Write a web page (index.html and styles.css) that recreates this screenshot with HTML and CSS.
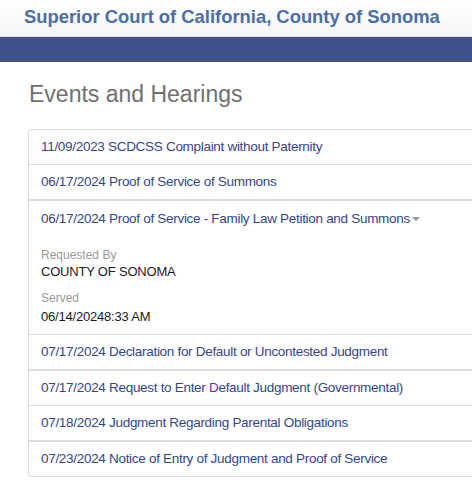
FILE: index.html
```html
<!DOCTYPE html>
<html lang="en">
<head>
<meta charset="utf-8">
<title>Events and Hearings</title>
<link rel="stylesheet" href="styles.css">
</head>
<body>
<header class="site-header">
  <div class="brand">Superior Court of California, County of Sonoma</div>
</header>
<nav class="navbar"></nav>
<main class="content">
  <h1 class="page-title">Events and Hearings</h1>
  <div class="event-list">
    <div class="event"><a class="event-link">11/09/2023 SCDCSS Complaint without Paternity</a></div>
    <div class="event"><a class="event-link">06/17/2024 Proof of Service of Summons</a></div>
    <div class="event event-thick event-open">
      <a class="event-link">06/17/2024 Proof of Service - Family Law Petition and Summons<span class="caret"></span></a>
      <dl class="details">
        <dt>Requested By</dt>
        <dd>COUNTY OF SONOMA</dd>
        <dt>Served</dt>
        <dd>06/14/20248:33 AM</dd>
      </dl>
    </div>
    <div class="event"><a class="event-link">07/17/2024 Declaration for Default or Uncontested Judgment</a></div>
    <div class="event event-thick"><a class="event-link">07/17/2024 Request to Enter Default Judgment (Governmental)</a></div>
    <div class="event"><a class="event-link">07/18/2024 Judgment Regarding Parental Obligations</a></div>
    <div class="event event-thick"><a class="event-link">07/23/2024 Notice of Entry of Judgment and Proof of Service</a></div>
  </div>
</main>
</body>
</html>
```
FILE: styles.css
```css
html, body {
  margin: 0;
  padding: 0;
  overflow: hidden;
  background: #fff;
  font-family: "Liberation Sans", Arial, sans-serif;
}

.site-header {
  height: 36px;
  background: linear-gradient(#ffffff, #f6f6f6);
  border-bottom: 1px solid #e4e4e4;
  padding-left: 24px;
  display: flex;
  align-items: center;
}

.brand {
  font-weight: bold;
  font-size: 18.4px;
  color: #4a6ea6;
  line-height: 22px;
  white-space: nowrap;
  margin-top: -2px;
}

.navbar {
  height: 25px;
  background: #40518b;
}

.content {
  padding-left: 28px;
}

.page-title {
  margin: 19px 0 0 1px;
  font-size: 23px;
  font-weight: normal;
  line-height: 26px;
  color: #707070;
}

.event-list {
  margin-top: 22px;
  width: 480px;
  border: 1px solid #dcdcdc;
  border-radius: 4px;
  box-shadow: 0 1px 2px rgba(0, 0, 0, 0.08);
}

.event {
  border-top: 1px solid #dedede;
  padding: 7px 12px;
}

.event:first-child {
  border-top: 0;
}

.event-thick {
  border-top: 2px solid #dedede;
}

.event-open {
  padding-top: 8px;
}

.event-link {
  display: block;
  font-size: 13.5px;
  letter-spacing: -0.3px;
  line-height: 20px;
  color: #34468a;
  white-space: nowrap;
}

.caret {
  display: inline-block;
  width: 0;
  height: 0;
  margin-left: 2px;
  vertical-align: middle;
  border-top: 4px solid #999;
  border-left: 4px solid transparent;
  border-right: 4px solid transparent;
}

.details {
  margin: 18px 0 0;
  padding-bottom: 1px;
}

.details dt {
  font-size: 12px;
  line-height: 16px;
  color: #999;
}

.details dd {
  margin: 0 0 10px;
  font-size: 13px;
  letter-spacing: -0.2px;
  line-height: 17px;
  color: #1a1a1a;
}

.details dd:last-child {
  margin-bottom: 0;
  line-height: 18px;
  margin-top: 2px;
}
```
